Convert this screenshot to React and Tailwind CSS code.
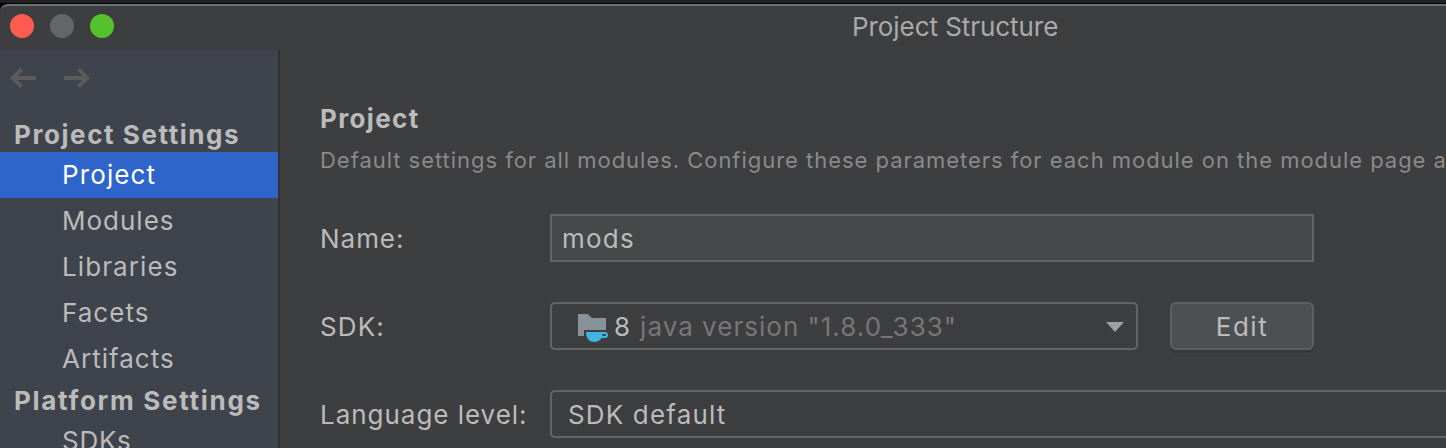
const ITEMS = [
  { label: "Project", active: true, spacing: "tracking-[1.12px]" },
  { label: "Modules", spacing: "tracking-[1px]" },
  { label: "Libraries", spacing: "tracking-[1.1px]" },
  { label: "Facets", spacing: "tracking-[1.02px]" },
  { label: "Artifacts", spacing: "tracking-[1.02px]" },
];

function TitleBar() {
  return (
    <header className="flex h-[44px] shrink-0 items-center">
      <div className="flex w-[852px] items-center gap-4 pl-2.5 pb-1">
        <span className="size-6 rounded-full bg-[#ff5b53]" />
        <span className="size-6 rounded-full bg-[#646568]" />
        <span className="size-6 rounded-full bg-[#54c22d]" />
      </div>
      <h1 className="pb-0.5 text-[26px] leading-8 tracking-[-0.06px] text-[#a9aaab]">Project Structure</h1>
    </header>
  );
}

function NavItem({ label, active, spacing }) {
  return (
    <li
      className={`flex h-[46px] shrink-0 items-center pl-[62px] ${spacing} ${
        active ? "bg-[#2f65ca] text-white" : "text-[#bbbbbb]"
      }`}
    >
      {label}
    </li>
  );
}

function Sidebar() {
  return (
    <nav className="flex w-[280px] shrink-0 flex-col border-r-2 border-[#323232] bg-[#3f434c]">
      <div className="flex h-[66px] shrink-0 items-start gap-7 pt-[18px] pl-2.5">
        <svg width="26" height="20" viewBox="0 0 26 20" fill="none" stroke="#5b5b5b" strokeWidth="4">
          <path d="M26 10H3M11.5 1.3L2.8 10l8.7 8.700" />
        </svg>
        <svg width="26" height="20" viewBox="0 0 26 20" fill="none" stroke="#5b5b5b" strokeWidth="4">
          <path d="M0 10h23M14.5 1.3l8.700 8.700l-8.700 8.700" />
        </svg>
      </div>
      <h2 className="flex h-9 shrink-0 items-center pt-0.5 pl-3.5 font-bold tracking-[1.57px]">Project Settings</h2>
      <ul className="flex shrink-0 flex-col">
        {ITEMS.map((item) => (
          <NavItem key={item.label} {...item} />
        ))}
      </ul>
      <h2 className="flex h-9 shrink-0 items-center pt-0.5 pl-3.5 font-bold tracking-[1.7px]">Platform Settings</h2>
      <ul className="flex shrink-0 flex-col">
        <NavItem label="SDKs" spacing="tracking-[0.72px]" />
      </ul>
    </nav>
  );
}

function JdkIcon() {
  return (
    <svg className="shrink-0" width="32" height="32" viewBox="0 0 32 32">
      <path d="M0 4h9.500l4.500 4h14v12H6v6H0z" fill="#87939a" transform="translate(0 -0)" />
      <path
        d="M8 22h19a3 3 0 0 1 0 6h-3.500c-1.500 2.500-4 4-7.500 4c-5 0-8-4-8-10zM24.500 24v2h2.500a1 1 0 0 0 0-2z"
        fill="#40b6e0"
        fillRule="evenodd"
      />
    </svg>
  );
}

function ProjectForm() {
  return (
    <main className="flex min-w-0 flex-1 flex-col overflow-hidden pt-[53px] pl-10">
      <h2 className="h-8 leading-8 font-bold tracking-[1.35px]">Project</h2>
      <p className="mt-[11px] h-7 text-[22px] leading-7 tracking-[0.965px] text-[#8a8a8a]">
        Default settings for all modules. Configure these parameters for each module on the module page as needed.
      </p>
      <div className="mt-10 flex h-12 items-center">
        <label className="w-[230px] shrink-0 pt-0.5 tracking-[0.97px]">Name:</label>
        <div className="flex h-12 w-[764px] shrink-0 items-center border-2 border-[#646464] bg-[#45494a] pt-0.5 pl-2.5 tracking-[1.2px]">
          mods
        </div>
      </div>
      <div className="mt-10 flex h-12 items-center">
        <label className="w-[230px] shrink-0 pt-0.5 tracking-[1.1px]">SDK:</label>
        <div className="flex h-12 w-[588px] shrink-0 items-center rounded-[5px] border-2 border-[#646464] pr-3 pl-[26px]">
          <JdkIcon />
          <span className="ml-1 pt-0.5">8</span>
          <span className="ml-2.5 flex-1 pt-0.5 tracking-[1.02px] text-[#777777]">java version "1.8.0_333"</span>
          <svg className="mt-0.5" width="18" height="10" viewBox="0 0 18 10">
            <path d="M0 0h18L9 10z" fill="#9da0a5" />
          </svg>
        </div>
        <button className="ml-8 flex h-12 w-36 shrink-0 items-center justify-center rounded-md border-2 border-[#5e6060] bg-[#4c5052] pt-0.5 tracking-[1.5px] shadow-[0_3px_0_#37383a]">
          Edit
        </button>
      </div>
      <div className="mt-10 flex h-12 items-center">
        <label className="w-[230px] shrink-0 pt-0.5 tracking-[0.97px]">Language level:</label>
        <div className="flex h-12 w-[940px] shrink-0 items-center rounded-[5px] border-2 border-[#646464] pt-0.5 pl-4 tracking-[1.16px]">
          SDK default
        </div>
      </div>
    </main>
  );
}

export default function App() {
  return (
    <div className="h-[448px] w-[1446px] overflow-hidden border-t-3 border-[#202022] bg-black pt-px font-['Inter','Liberation_Sans',sans-serif] text-[26px] leading-8 whitespace-nowrap text-[#bbbbbb]">
      <div className="flex h-[444px] flex-col overflow-hidden rounded-tl-lg border-t-2 border-[#6f7070] bg-[#3d3e40]">
        <TitleBar />
        <div className="flex min-h-0 flex-1 overflow-hidden">
          <Sidebar />
          <ProjectForm />
        </div>
      </div>
    </div>
  );
}
